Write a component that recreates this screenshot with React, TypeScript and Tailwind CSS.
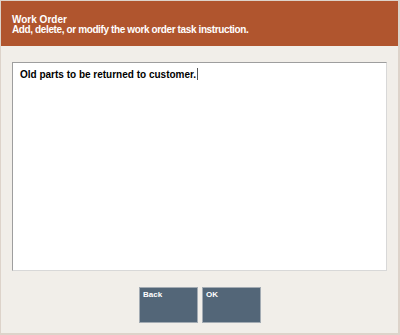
export default function App() {
  return (
    <div
      className="flex h-[335px] w-[400px] flex-col border-t border-r-2 border-b-2 border-l border-[#ddd3ca] bg-[#f1eee9]"
      style={{ fontFamily: '"Liberation Sans", Arial, sans-serif' }}
    >
      <div className="h-[45px] bg-[#b0552e] px-[11px] pt-[14px] text-white">
        <p className="text-[10px] font-bold leading-[10px]">Work Order</p>
        <p className="text-[10px] font-bold leading-[10px] tracking-[-0.38px]">
          Add, delete, or modify the work order task instruction.
        </p>
      </div>

      <div className="px-[11px] pt-[16px]">
        <div className="h-[209px] border border-t-[#9e9e9e] border-l-[#9e9e9e] border-r-[#d8d8d8] border-b-[#d8d8d8] bg-white px-[7px] pt-[3px]">
          <p className="text-[10px] font-bold leading-[12px] text-black">
            Old parts to be returned to customer.
            <span className="ml-px inline-block h-[12px] w-px translate-y-[2px] bg-[#555]" />
          </p>
        </div>
      </div>

      <div className="flex justify-center gap-[4px] pt-[16px] pl-[1px]">
        <button className="flex h-[36px] w-[59px] flex-col items-start justify-start border border-[#a3abb3] bg-[#536678] px-[3px] pt-[2px] text-[8px] font-bold leading-[10px] text-white">
          Back
        </button>
        <button className="flex h-[36px] w-[59px] flex-col items-start justify-start border border-[#a3abb3] bg-[#536678] px-[3px] pt-[2px] text-[8px] font-bold leading-[10px] text-white">
          OK
        </button>
      </div>
    </div>
  );
}
